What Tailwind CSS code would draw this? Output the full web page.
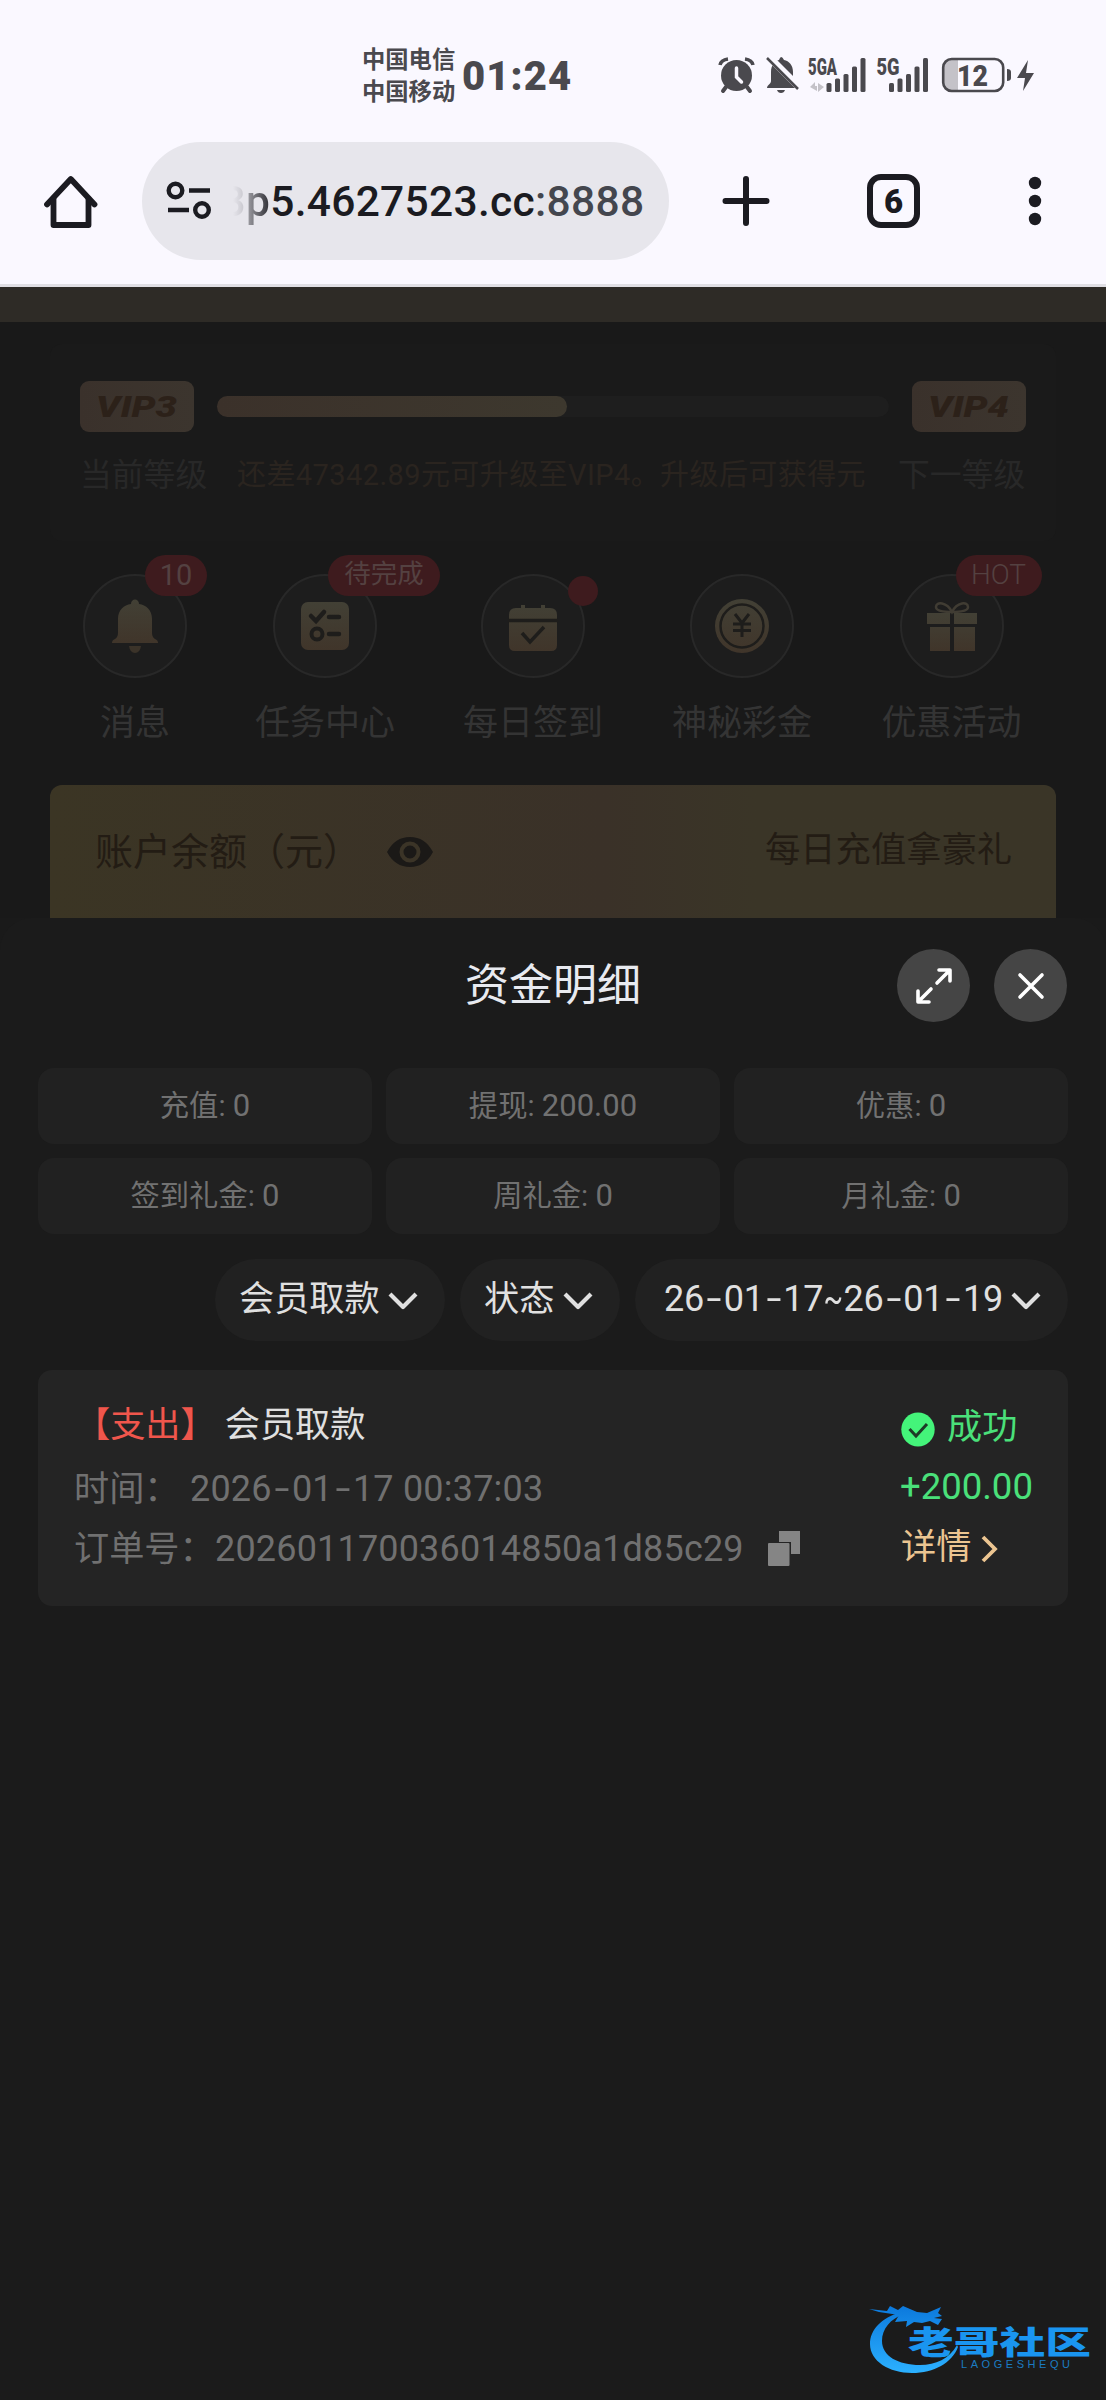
<!DOCTYPE html>
<html lang="zh-CN">
<head>
<meta charset="utf-8">
<title>资金明细</title>
<script src="https://cdn.jsdelivr.net/npm/@tailwindcss/browser@4"></script>
</head>
<body class="w-[1106px] h-[2400px] overflow-hidden bg-[#1a1a1a] font-['Roboto','Noto_Sans_CJK_SC',sans-serif] whitespace-nowrap">

<!-- browser header -->
<header class="h-[287px] bg-[#faf8ff] border-b-[3px] border-[#e0dfe4]">
  <div class="flex h-[142px] pt-[44px] pl-[362px] text-[#4a494e]">
    <div class="w-[100px] text-[23.3px] leading-[32px] font-bold">
      <div>中国电信</div>
      <div>中国移动</div>
    </div>
    <div class="w-[256px] h-[64px] leading-[66px] text-[40px] font-black tracking-[1.1px]">01:24</div>
    <svg class="w-[320px] h-[50px] mt-[6px]" viewBox="718 50 320 50" fill="#4a494e">
      <circle cx="736.5" cy="75.500" r="15.500"/>
      <path d="M720 65q1-5 8-6M753 65q-1-5-8-6" stroke="#4a494e" stroke-width="3.500" fill="none"/>
      <path d="M726 87l-3 4M747 87l3 4" stroke="#4a494e" stroke-width="4" stroke-linecap="round"/>
      <path d="M736.500 68v9l5 5" stroke="#faf8ff" stroke-width="3.500" fill="none" stroke-linecap="round"/>
      <path d="M767 88c0-3 4-4 4-7v-9c0-7 4-11 8-12q2-6 5 0c5 1 9 5 9 12v9c0 3 4 4 4 7z"/>
      <path d="M777 90h8q-1 3-4 3t-4-3z"/>
      <path d="M770 58l30 30" stroke="#faf8ff" stroke-width="7"/>
      <path d="M767 58l31 31" stroke="#4a494e" stroke-width="2.500"/>
      <text x="808" y="74.500" font-size="23" font-weight="900" textLength="29" lengthAdjust="spacingAndGlyphs">5GA</text>
      <g>
        <rect x="826.500" y="83" width="5" height="9" rx="1.500"/><rect x="835" y="78.500" width="5" height="13.500" rx="1.500"/><rect x="843.500" y="74" width="5" height="18" rx="1.500"/><rect x="852" y="66.500" width="5" height="25.500" rx="1.500"/><rect x="860.500" y="58" width="5" height="34" rx="1.500"/>
        <path d="M810 87l5-5v4h2v5zM824 87l-6 5v-9z" fill="#c4c2c8"/>
      </g>
      <text x="876.500" y="74.500" font-size="23" font-weight="900" textLength="23" lengthAdjust="spacingAndGlyphs">5G</text>
      <rect x="889" y="83" width="5" height="9" rx="1.500"/><rect x="897.500" y="78.500" width="5" height="13.500" rx="1.500"/><rect x="906" y="74" width="5" height="18" rx="1.500"/><rect x="914.500" y="66.500" width="5" height="25.500" rx="1.500"/><rect x="923" y="58" width="5" height="34" rx="1.500"/>
      <path d="M951 60h7v30h-7q-7 0-7-7V67q0-7 7-7z" fill="#c4c2c8"/>
      <rect x="943.200" y="59" width="60" height="32" rx="8.500" fill="none" stroke="#4a494e" stroke-width="2.600"/>
      <path d="M1007 69q4 0 4 3v6q0 3-4 3z"/>
      <text x="957" y="85.500" font-size="29" font-weight="900" textLength="31" lengthAdjust="spacingAndGlyphs">12</text>
      <path d="M1028 60l-11 18h8l-2 13 11-18h-8z"/>
    </svg>
  </div>

  <div class="flex items-center h-[118px] text-[#1b1b21]">
    <svg class="ml-[42px] w-[58px] h-[58px] mr-[42px]" viewBox="42 172 58 58" fill="none" stroke="#1b1b21" stroke-width="5.800" stroke-linecap="round" stroke-linejoin="round"><path d="M47 204.500L70.800 179 94.500 204.500"/><path d="M53.500 199v26h35v-26"/></svg>
    <div class="flex items-center w-[527px] h-[118px] rounded-full bg-[#e7e6ec] pl-[23px]">
      <svg class="w-[48px] h-[44px] mr-[20px]" viewBox="165 180 48 44" fill="none" stroke="#1b1b21" stroke-width="4.400"><circle cx="175.500" cy="191.500" r="6.800"/><path d="M189 191.500h21M168 211h21"/><circle cx="202" cy="211" r="6.800"/></svg>
      <div class="flex pt-[2px] text-[42.500px] leading-[60px] font-medium tracking-[0.3px]"><span class="w-[13px] flex justify-end overflow-hidden text-transparent bg-clip-text bg-linear-to-r from-[#e7e6ec] to-[#c4c3ca]">3</span><span class="text-transparent bg-clip-text bg-linear-to-r from-[#a5a4aa] to-[#303036]">p</span><span>5.4627523.cc</span><span class="text-[#44464e]">:8888</span></div>
    </div>
    <svg class="ml-[53px] w-[48px] h-[50px]" viewBox="0 0 48 50" stroke="#1b1b21" stroke-width="6" stroke-linecap="round"><path d="M24 3v44M3.500 25h41"/></svg>
    <div class="ml-[97px] w-[53px] h-[54px] rounded-[14px] border-[6px] border-[#1b1b21] text-center text-[33px] font-black leading-[43px]">6</div>
    <svg class="ml-[108px] w-[14px] h-[50px]" viewBox="0 0 14 50" fill="#1b1b21"><circle cx="7" cy="7" r="6.200"/><circle cx="7" cy="25" r="6.200"/><circle cx="7" cy="43" r="6.200"/></svg>
  </div>
</header>

<!-- dimmed member page -->
<div class="h-[35px] bg-[#2e2b26]"></div>
<main class="h-[596px] bg-[#191919] px-[50px] pt-[22px]">
  <section class="h-[197px] rounded-[12px] bg-[#1a1a1a] pt-[37px] pl-[30px]">
    <div class="flex items-center">
      <div class="w-[114px] h-[51px] rounded-[9px] bg-linear-to-r from-[#3a312b] to-[#3c352e] flex items-center justify-center">
        <svg class="w-[90px] h-[36px]" viewBox="-3 -6 90 36" fill="#2c2119"><text x="1" y="22" font-size="29" font-weight="900" font-style="italic" textLength="81" lengthAdjust="spacingAndGlyphs">VIP3</text></svg>
      </div>
      <div class="ml-[23px] w-[672px] h-[21px] rounded-full bg-[#1e1e1e]"><div class="w-[350px] h-full rounded-full bg-linear-to-r from-[#3b312a] to-[#3d382e]"></div></div>
      <div class="ml-[23px] w-[114px] h-[51px] rounded-[9px] bg-linear-to-r from-[#3a312b] to-[#3c352e] flex items-center justify-center">
        <svg class="w-[90px] h-[36px]" viewBox="-3 -6 90 36" fill="#2c2119"><text x="1" y="22" font-size="29" font-weight="900" font-style="italic" textLength="81" lengthAdjust="spacingAndGlyphs">VIP4</text></svg>
      </div>
    </div>
    <div class="flex mt-[21px] text-[#282828] leading-[44px] text-[31.8px]">
      <span class="w-[157px]">当前等级</span>
      <span class="w-[661px] text-[29px] tracking-[0.420px] text-[#2a241f]">还差47342.89元可升级至VIP4。升级后可获得元</span>
      <span>下一等级</span>
    </div>
  </section>

  <section class="flex h-[244px] pt-[33px] pl-[5px] -ml-[20px] text-[#343434]">
    <div class="w-[190px] flex flex-col items-center pl-[10px]">
      <div class="relative w-[104px] h-[104px] rounded-full border-2 border-[#282828] bg-[#1d1d1d] flex items-center justify-center">
        <svg class="w-[48px] h-[56px]" viewBox="0 0 48 56"><defs><linearGradient id="gold" x2="0" y2="1"><stop stop-color="#424035"/><stop offset="1" stop-color="#40352a"/></linearGradient></defs><path fill="url(#gold)" d="M1 45q0-3 3-4 3-2 3-6V21C7 12 13 7 20 6c0-6 8-6 8 0 7 1 13 6 13 15v14q0 4 3 6 3 1 3 4z"/><path fill="#3b3329" d="M18 48h12q-1 7-6 7t-6-7z"/></svg>
        <span class="absolute left-[60px] -top-[21px] w-[62px] h-[41px] rounded-full bg-[#3e1b1e] text-[#544141] text-[29px] leading-[40px] text-center">10</span>
      </div>
      <span class="mt-[21px] text-[35px] leading-[50px]">消息</span>
    </div>
    <div class="w-[190px] flex flex-col items-center pl-[10px]">
      <div class="relative w-[104px] h-[104px] rounded-full border-2 border-[#282828] bg-[#1d1d1d] flex items-center justify-center">
        <svg class="w-[48px] h-[48px]" viewBox="0 0 48 48"><rect width="48" height="48" rx="7" fill="url(#gold)"/><path d="M10 14l5 5 8-9M28 15h10M28 32h10" fill="none" stroke="#1e1d1b" stroke-width="4.500" stroke-linecap="round"/><circle cx="16" cy="32" r="5.500" fill="none" stroke="#1e1d1b" stroke-width="4"/></svg>
        <span class="absolute left-[53px] -top-[21px] w-[112px] h-[41px] rounded-full bg-[#3e1b1e] text-[#544141] text-[26.500px] leading-[38px] text-center">待完成</span>
      </div>
      <span class="mt-[21px] text-[35px] leading-[50px]">任务中心</span>
    </div>
    <div class="w-[208px] flex flex-col items-center pl-[28px]">
      <div class="relative w-[104px] h-[104px] rounded-full border-2 border-[#282828] bg-[#1d1d1d] flex items-center justify-center">
        <svg class="w-[50px] h-[48px] mt-[3px]" viewBox="0 0 50 48"><path fill="url(#gold)" d="M8 4h5V1h4v3h16V1h4v3h5q7 0 7 7v30q0 6-6 6H7q-6 0-6-6V11q0-7 7-7z"/><path d="M0 16.500h50" stroke="#1e1d1b" stroke-width="3.500"/><path d="M14 29l8 9 14-15" fill="none" stroke="#1e1d1b" stroke-width="3.500"/></svg>
        <span class="absolute left-[85px] top-0 w-[30px] h-[30px] rounded-full bg-[#3e1b1e]"></span>
      </div>
      <span class="mt-[21px] text-[35px] leading-[50px]">每日签到</span>
    </div>
    <div class="w-[209px] flex flex-col items-center pl-[29px]">
      <div class="w-[104px] h-[104px] rounded-full border-2 border-[#282828] bg-[#1d1d1d] flex items-center justify-center">
        <svg class="w-[54px] h-[54px]" viewBox="0 0 54 54"><circle cx="27" cy="27" r="27" fill="url(#gold)"/><circle cx="27" cy="27" r="21.500" fill="none" stroke="#1e1d1b" stroke-width="2.500"/><path d="M20 15l7 9 7-9M18 25h18M18 31.500h18M27 24v14" fill="none" stroke="#1e1d1b" stroke-width="3"/></svg>
      </div>
      <span class="mt-[21px] text-[35px] leading-[50px]">神秘彩金</span>
    </div>
    <div class="w-[209px] flex flex-col items-center pl-[30px]">
      <div class="relative w-[104px] h-[104px] rounded-full border-2 border-[#282828] bg-[#1d1d1d] flex items-center justify-center">
        <svg class="w-[50px] h-[50px]" viewBox="0 0 50 50"><path d="M25 11C20 1 9 0 9 6q0 5 16 5Q41 11 41 6C41 0 30 1 25 11z" fill="none" stroke="#403c33" stroke-width="2.500"/><path fill="url(#gold)" d="M0 12h23v11H0zM27 12h23v11H27zM3 26h20v24H3zM27 26h21v24H27z"/></svg>
        <span class="absolute left-[54px] -top-[21px] w-[86px] h-[41px] rounded-full bg-[#3e1b1e] text-[#544141] text-[28px] font-light leading-[39px] text-center">HOT</span>
      </div>
      <span class="mt-[21px] text-[35px] leading-[50px]">优惠活动</span>
    </div>
  </section>

  <section class="flex items-center h-[133px] rounded-t-[12px] pl-[45px] bg-linear-to-r from-[#3b3524] via-[#3a3128] via-55% to-[#3a3527] to-70% text-[#231c14]">
    <span class="w-[292px] text-[38px] leading-[50px]">账户余额（元）</span>
    <svg class="w-[46px] h-[32px] mr-[332px]" viewBox="0 0 46 32"><path fill="#1b1917" d="M0 16Q8 1 23 1t23 15Q38 31 23 31T0 16z"/><circle cx="23" cy="16" r="8.500" fill="none" stroke="#3b3427" stroke-width="4"/></svg>
    <span class="text-[35.300px] leading-[50px] pb-[4px]">每日充值拿豪礼</span>
  </section>
</main>

<!-- funds detail sheet -->
<section class="relative h-[1482px] rounded-t-[32px] bg-[#1b1b1b] px-[38px] pt-[31px]">
  <div class="flex items-center h-[73px] text-[#e8eaf0]">
    <h1 class="ml-[427px] w-[432px] text-[44px] leading-[60px]">资金明细</h1>
    <div class="w-[73px] h-[73px] rounded-full bg-[#454545] flex items-center justify-center"><svg class="w-[38px] h-[38px]" viewBox="0 0 38 38" fill="none" stroke="#fff" stroke-width="3.600" stroke-linejoin="round" stroke-linecap="round"><path d="M22 16L34 4M24 3h11v11M16 22L4 34M3 24v11h11"/></svg></div>
    <div class="ml-[24px] w-[73px] h-[73px] rounded-full bg-[#454545] flex items-center justify-center"><svg class="w-[28px] h-[28px]" viewBox="0 0 28 28" stroke="#fff" stroke-width="3.600" stroke-linecap="round"><path d="M3 3l22 22M25 3L3 25"/></svg></div>
  </div>

  <div class="grid grid-cols-3 gap-[14px] mt-[46px] text-[29.300px] leading-[76px] text-center text-[#717171]">
    <div class="h-[76px] rounded-[16px] bg-[#212121]">充值: <span class="text-[31px]">0</span></div>
    <div class="h-[76px] rounded-[16px] bg-[#212121]">提现: <span class="text-[31px]">200.00</span></div>
    <div class="h-[76px] rounded-[16px] bg-[#212121]">优惠: <span class="text-[31px]">0</span></div>
    <div class="h-[76px] rounded-[16px] bg-[#212121]">签到礼金: <span class="text-[31px]">0</span></div>
    <div class="h-[76px] rounded-[16px] bg-[#212121]">周礼金: <span class="text-[31px]">0</span></div>
    <div class="h-[76px] rounded-[16px] bg-[#212121]">月礼金: <span class="text-[31px]">0</span></div>
  </div>

  <div class="flex justify-end gap-[15px] mt-[25px] text-[35.200px] leading-[80px] text-[#e0e0e0]">
    <div class="flex w-[230px] h-[82px] rounded-full bg-[#212121] pl-[24px]"><span class="w-[149px]">会员取款</span><svg class="w-[30px] h-[20px] mt-[32px]" viewBox="0 0 30 20" fill="none" stroke="#e0e0e0" stroke-width="4.200" stroke-linejoin="round"><path d="M2 3l13 13L28 3"/></svg></div>
    <div class="flex w-[160px] h-[82px] rounded-full bg-[#212121] pl-[24px]"><span class="w-[79px]">状态</span><svg class="w-[30px] h-[20px] mt-[32px]" viewBox="0 0 30 20" fill="none" stroke="#e0e0e0" stroke-width="4.200" stroke-linejoin="round"><path d="M2 3l13 13L28 3"/></svg></div>
    <div class="flex w-[433px] h-[82px] rounded-full bg-[#212121] pl-[29px]"><span class="w-[347px] text-[36px] tracking-[-0.250px]">26<span class="inline-block mx-[5px] scale-x-150">-</span>01<span class="inline-block mx-[5px] scale-x-150">-</span>17<span class="inline-block -mx-[2px] scale-x-80">~</span>26<span class="inline-block mx-[5px] scale-x-150">-</span>01<span class="inline-block mx-[5px] scale-x-150">-</span>19</span><svg class="w-[30px] h-[20px] mt-[32px]" viewBox="0 0 30 20" fill="none" stroke="#e0e0e0" stroke-width="4.200" stroke-linejoin="round"><path d="M2 3l13 13L28 3"/></svg></div>
  </div>

  <article class="flex h-[236px] mt-[29px] rounded-[14px] bg-[#242424] pl-[37px] pt-[25px] text-[35.200px] text-[#707070]">
    <div class="w-[826px]">
      <div class="h-[64px] leading-[60px] text-[#e0e0e0]"><span class="text-[#f0564c]">【支出】</span><span class="ml-[9px]">会员取款</span></div>
      <div class="flex h-[60px] leading-[60px]"><span class="w-[116px] -ml-px">时间：</span><span class="text-[36px] tracking-[0.2px]">2026<span class="inline-block mx-[5px] scale-x-150">-</span>01<span class="inline-block mx-[5px] scale-x-150">-</span>17 00:37:03</span></div>
      <div class="flex items-center h-[60px] leading-[60px]"><span class="w-[141px] -ml-px">订单号：</span><span class="w-[553px] text-[36px] tracking-[0.180px]">202601170036014850a1d85c29</span>
        <svg class="w-[33px] h-[36px]" viewBox="0 0 33 36" fill="#858585"><path d="M11 0h21v23h-9V11H11z"/><rect y="12" width="21.500" height="23" rx="1"/></svg></div>
    </div>
    <div class="text-[#4ae07a]">
      <div class="flex items-center h-[64px] leading-[60px]"><svg class="w-[34px] h-[35px] mr-[12px] mt-[5px]" viewBox="0 0 34 35"><ellipse cx="17" cy="17.500" rx="16.700" ry="17" fill="#44f47a"/><path d="M8.500 17l6.500 7L26 12" fill="none" stroke="#1d3b26" stroke-width="3"/></svg><span>成功</span></div>
      <div class="h-[58px] leading-[56px] text-[36.500px] -ml-px">+200.00</div>
      <div class="flex items-center h-[60px] leading-[60px] text-[#ecc591]"><span class="w-[80px]">详情</span><svg class="w-[17px] h-[28px] mt-[4px]" viewBox="0 0 17 28" fill="none" stroke="#ecc591" stroke-width="3.800"><path d="M2 2l12 12L2 26"/></svg></div>
    </div>
  </article>

  <!-- site watermark -->
  <svg class="absolute left-[865px] top-[1380px] w-[236px] h-[84px]" viewBox="864 2298 236 84" font-family="'Noto Sans CJK SC',sans-serif">
    <defs><linearGradient id="sea" gradientUnits="userSpaceOnUse" x1="0" y1="2305" x2="0" y2="2372"><stop stop-color="#0b78dc"/><stop offset="1" stop-color="#2bb0ff"/></linearGradient></defs>
    <g fill="url(#sea)">
      <path d="M900 2312C880 2318 869 2330 869 2344c0 17 19 29 42 29 22 0 40-10 46-26l-1-2c-8 14-21 20-37 20-22 0-38-9-38-24 0-12 8-22 22-27z"/>
      <path d="M868 2309l18 2 3-5 8 4 5-4 14 6 10 1 14-6-3 6 4 3-8 2 8 1-4 6-8-4-8 2-8-1-8 5 1-6-12 1 4-7-20-3z"/>
    </g>
    <g fill="#1a95f0">
      <text x="907" y="2354" font-size="40" font-weight="900" textLength="183" lengthAdjust="spacingAndGlyphs" transform="translate(0 471) scale(1 .8)">老哥社区</text>
      <text x="960" y="2368" font-size="11" font-family="Liberation Sans" textLength="109" fill="#1b7cc2">LAOGESHEQU</text>
    </g>
  </svg>
</section>
</body>
</html>
